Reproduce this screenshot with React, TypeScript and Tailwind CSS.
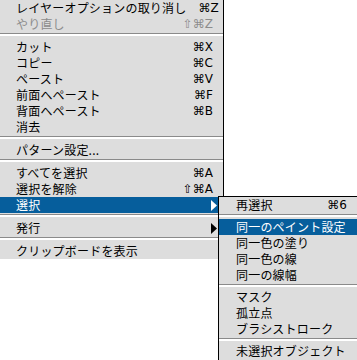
import React from "react";

type Item =
  | { kind: "sep" }
  | {
      kind: "item";
      label: string;
      shortcut?: string;
      disabled?: boolean;
      active?: boolean;
      submenu?: boolean;
    };

const mainItems: Item[] = [
  { kind: "item", label: "レイヤーオプションの取り消し", shortcut: "⌘Z" },
  { kind: "item", label: "やり直し", shortcut: "⇧⌘Z", disabled: true },
  { kind: "sep" },
  { kind: "item", label: "カット", shortcut: "⌘X" },
  { kind: "item", label: "コピー", shortcut: "⌘C" },
  { kind: "item", label: "ペースト", shortcut: "⌘V" },
  { kind: "item", label: "前面へペースト", shortcut: "⌘F" },
  { kind: "item", label: "背面へペースト", shortcut: "⌘B" },
  { kind: "item", label: "消去" },
  { kind: "sep" },
  { kind: "item", label: "パターン設定..." },
  { kind: "sep" },
  { kind: "item", label: "すべてを選択", shortcut: "⌘A" },
  { kind: "item", label: "選択を解除", shortcut: "⇧⌘A" },
  { kind: "item", label: "選択", active: true, submenu: true },
  { kind: "sep" },
  { kind: "item", label: "発行", submenu: true },
  { kind: "sep" },
  { kind: "item", label: "クリップボードを表示" },
];

const subItems: Item[] = [
  { kind: "item", label: "再選択", shortcut: "⌘6" },
  { kind: "sep" },
  { kind: "item", label: "同一のペイント設定", active: true },
  { kind: "item", label: "同一色の塗り" },
  { kind: "item", label: "同一色の線" },
  { kind: "item", label: "同一の線幅" },
  { kind: "sep" },
  { kind: "item", label: "マスク" },
  { kind: "item", label: "孤立点" },
  { kind: "item", label: "ブラシストローク" },
  { kind: "sep" },
  { kind: "item", label: "未選択オブジェクト" },
];

function Separator({ sub }: { sub?: boolean }) {
  return (
    <div className={sub ? "h-[6px] flex flex-col" : "h-[7px] flex flex-col"}>
      <div className="h-px" />
      <div className="h-px bg-[#8a8a8a]" />
      <div className="h-[2px] bg-white" />
    </div>
  );
}

function Row({ item, sub }: { item: Extract<Item, { kind: "item" }>; sub?: boolean }) {
  return (
    <div
      className={
        "h-4 flex items-center justify-between gap-3 " +
        (sub ? "pl-[17px] pr-[12px] " : "pl-4 pr-[10px] ") +
        (item.active ? "bg-[#065e9c] text-white" : item.disabled ? "text-[#8c8c8c]" : "text-black")
      }
    >
      <span className="text-[12px] leading-4 tracking-[0.2px] whitespace-nowrap">{item.label}</span>
      {item.shortcut && (
        <span className="text-[12px] leading-4 whitespace-nowrap" style={{ fontFamily: '"DejaVu Sans", sans-serif' }}>
          {item.shortcut}
        </span>
      )}
      {item.submenu && (
        <svg width="6" height="11" viewBox="0 0 6 11" className="mr-[-4px]">
          <polygon points="0,0 6,5.5 0,11" fill={item.active ? "#ffffff" : "#000000"} />
        </svg>
      )}
    </div>
  );
}

export default function App() {
  return (
    <div
      className="relative w-[357px] h-[360px] bg-white overflow-hidden"
      style={{ fontFamily: '"Noto Sans CJK JP", "Noto Sans", sans-serif' }}
    >
      <div className="w-[224px] bg-[#dddddd] border-r border-black">
        {mainItems.map((it, i) =>
          it.kind === "sep" ? <Separator key={i} /> : <Row key={i} item={it} />
        )}
      </div>
      <div className="absolute left-[218px] top-[196px] bottom-0 w-[141px] bg-[#dddddd] border-l border-t border-black">
        {subItems.map((it, i) =>
          it.kind === "sep" ? <Separator key={i} sub /> : <Row key={i} item={it} sub />
        )}
      </div>
    </div>
  );
}
